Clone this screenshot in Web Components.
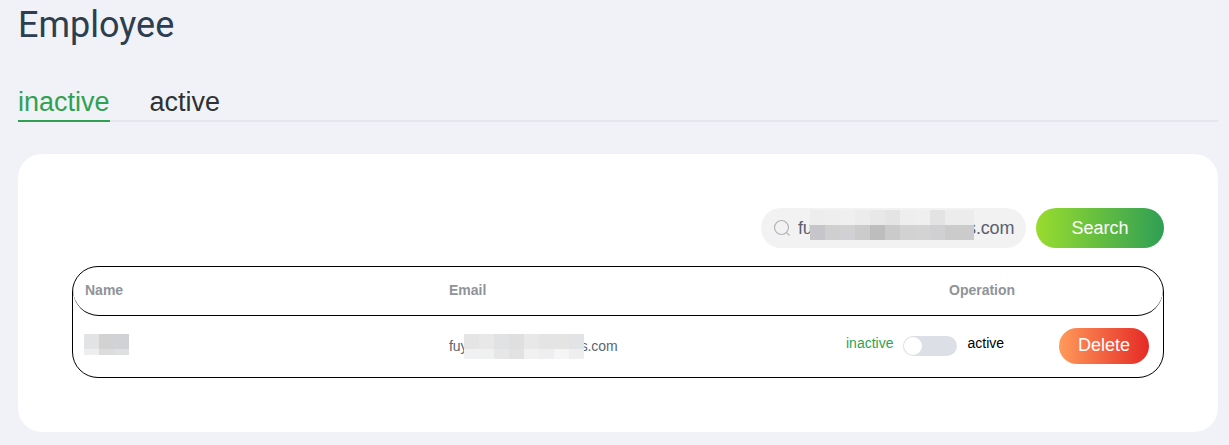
<!DOCTYPE html>
<html lang="en"><head><meta charset="utf-8"><title>Employee</title>
<style>
html,body{margin:0;padding:0}
body{background:#f0f2f7;font-family:"Liberation Sans",Arial,sans-serif;width:1229px;height:445px;overflow:hidden}
</style></head><body>
<employee-page></employee-page>
<script>
function def(name, html){
  customElements.define(name, class extends HTMLElement{
    constructor(){super();this.attachShadow({mode:'open'}).innerHTML=html;}
  });
}
class Mosaic extends HTMLElement{
  constructor(){super();
    const cols=JSON.parse(this.getAttribute('cols'));
    const rows=JSON.parse(this.getAttribute('rows'));
    const colors=JSON.parse(this.getAttribute('colors'));
    const cells=colors.map(c=>`<i style="background:${c}"></i>`).join('');
    this.attachShadow({mode:'open'}).innerHTML=`<style>
      :host{display:grid;position:absolute;grid-template-columns:${cols.map(c=>c+'px').join(' ')};grid-template-rows:${rows.map(c=>c+'px').join(' ')}}
      i{display:block}
    </style>${cells}`;
  }
}
customElements.define('blur-mosaic',Mosaic);
def('page-title',`<style>
  :host{display:block;font:400 36px/40px Roboto,sans-serif;color:#2c3e50;padding:5px 0 0 18px;height:40px}
</style><slot></slot>`);
def('tab-bar',`<style>
  :host{display:flex;margin:35px 11px 0 18px;border-bottom:2px solid #e4e7ed;gap:40px;box-sizing:border-box;height:42px}
</style><slot></slot>`);
def('tab-item',`<style>
  :host{display:block;font:400 27px/44px "Liberation Sans",Arial,sans-serif;color:#303133;height:40px;margin-bottom:-2px;padding-bottom:2px;position:relative}
  :host([selected]){color:#2fa152;}
  :host([selected])::after{content:"";position:absolute;left:0;right:0;bottom:0;height:2px;background:#2fa152}
</style><slot></slot>`);
def('main-card',`<style>
  :host{display:block;background:#fff;border-radius:24px;margin:32px 11px 0 18px;height:278px;box-sizing:border-box;padding:54px 54px 0}
</style><slot></slot>`);
def('search-bar',`<style>
  :host{display:flex;justify-content:flex-end;gap:10px;height:40px;margin-bottom:18px}
</style><slot></slot>`);
def('search-input',`<style>
  :host{display:flex;align-items:center;width:265px;height:40px;border-radius:20px;background:#f2f2f3;box-sizing:border-box;padding-left:12px;position:relative;color:#5a606e;font-size:18px;letter-spacing:-.13px}
  svg{width:18px;height:18px;margin-right:7px;flex:none}
  span{white-space:nowrap}
</style><svg viewBox="0 0 18 18" fill="none" stroke="#b0b2b8" stroke-width="1.2"><circle cx="8.5" cy="8.5" r="7"/><path d="M13.6 13.6 16.2 16.2" stroke-linecap="round"/></svg><span><slot></slot></span>`);
def('grad-button',`<style>
  :host{display:flex;align-items:center;justify-content:center;color:#fff;font-size:18px;border-radius:20px;width:128px;height:40px;background:linear-gradient(90deg,#99dc2e,#2f9f54)}
  :host([danger]){width:90px;height:36px;border-radius:18px;background:linear-gradient(90deg,#ff9a5a,#e52a26)}
</style><slot></slot>`);
def('emp-table',`<style>
  :host{display:block;position:relative;height:112px;border:1px solid #000;border-radius:26px;box-sizing:border-box}
</style><slot></slot>`);
def('emp-head',`<style>
  :host{display:grid;grid-template-columns:364px 500px 1fr;height:48px;border-bottom:1px solid #000;border-radius:0 0 26px 26px;font-weight:700;font-size:14px;line-height:47px;color:#909399;padding-left:12px}
</style><slot></slot>`);
def('emp-row',`<style>
  :host{display:grid;grid-template-columns:364px 397px 1fr;height:61px;padding-left:12px;align-items:center;position:relative;color:#5a6675;font-size:14px}
</style><slot></slot>`);
def('status-switch',`<style>
  :host{display:flex;align-items:center;font-size:14px;color:#000;height:36px;transform:translateY(-3px)}
  .off{color:#2fa152;margin-right:10px}
  .on{margin-left:10px}
  .t{width:54px;height:20px;border-radius:10px;background:#dcdfe6;position:relative;flex:none;margin-top:6px}
  .t i{position:absolute;left:1px;top:1px;width:18px;height:18px;border-radius:50%;background:#fff}
</style><span class="off">inactive</span><span class="t"><i></i></span><span class="on">active</span>`);
def('employee-page',`<style>:host{display:block}
  .ops{display:flex;align-items:center;justify-content:space-between;margin:0 14px 2px 0}
  .name{height:21px}
  .em{position:relative;letter-spacing:-.09px;margin-bottom:2px}
</style>
<page-title>Employee</page-title>
<tab-bar><tab-item selected>inactive</tab-item><tab-item>active</tab-item></tab-bar>
<main-card>
  <search-bar>
    <search-input>fuy@example-address.com
      <blur-mosaic style="left:49px;top:2px" cols="[15,15,15,15,15,15,15,15,15,29]" rows="[15,15]" colors='["#ededee","#eeeeee","#efefef","#ececec","#e8e8e8","#e4e4e4","#eeeeee","#efefef","#e3e3e4","#ececec","#c6c6ca","#cfcfd0","#d1d1d3","#cbcbcc","#bdbdbd","#cacaca","#d2d2d2","#d3d3d3","#d0d0d2","#cbcbcb"]'></blur-mosaic>
    </search-input>
    <grad-button>Search</grad-button>
  </search-bar>
  <emp-table>
    <emp-head><span>Name</span><span>Email</span><span>Operation</span></emp-head>
    <emp-row>
      <span class="name"><blur-mosaic style="left:11px;top:18px" cols="[15,15,15]" rows="[15,6]" colors='["#e2e3e5","#d2d2d2","#d1d2d5","#eeeef0","#dcdcdc","#dedfe0"]'></blur-mosaic></span>
      <span class="em">fuy@example-address.com<blur-mosaic style="left:15px;top:-4px" cols="[15,15,15,15,15,15,15,15]" rows="[15,10]" colors='["#e5e5e5","#e8e8e8","#e1e2e3","#dfdfdf","#e8e8e9","#e4e4e4","#e4e4e2","#e2e3e4","#f0f1f2","#eff0f0","#e7e7e7","#e2e2e2","#f1f1f2","#eeeef0","#f5f5f5","#eeeeee"]'></blur-mosaic></span>
      <span class="ops"><status-switch></status-switch><grad-button danger>Delete</grad-button></span>
    </emp-row>
  </emp-table>
</main-card>`);
</script>
</body></html>
